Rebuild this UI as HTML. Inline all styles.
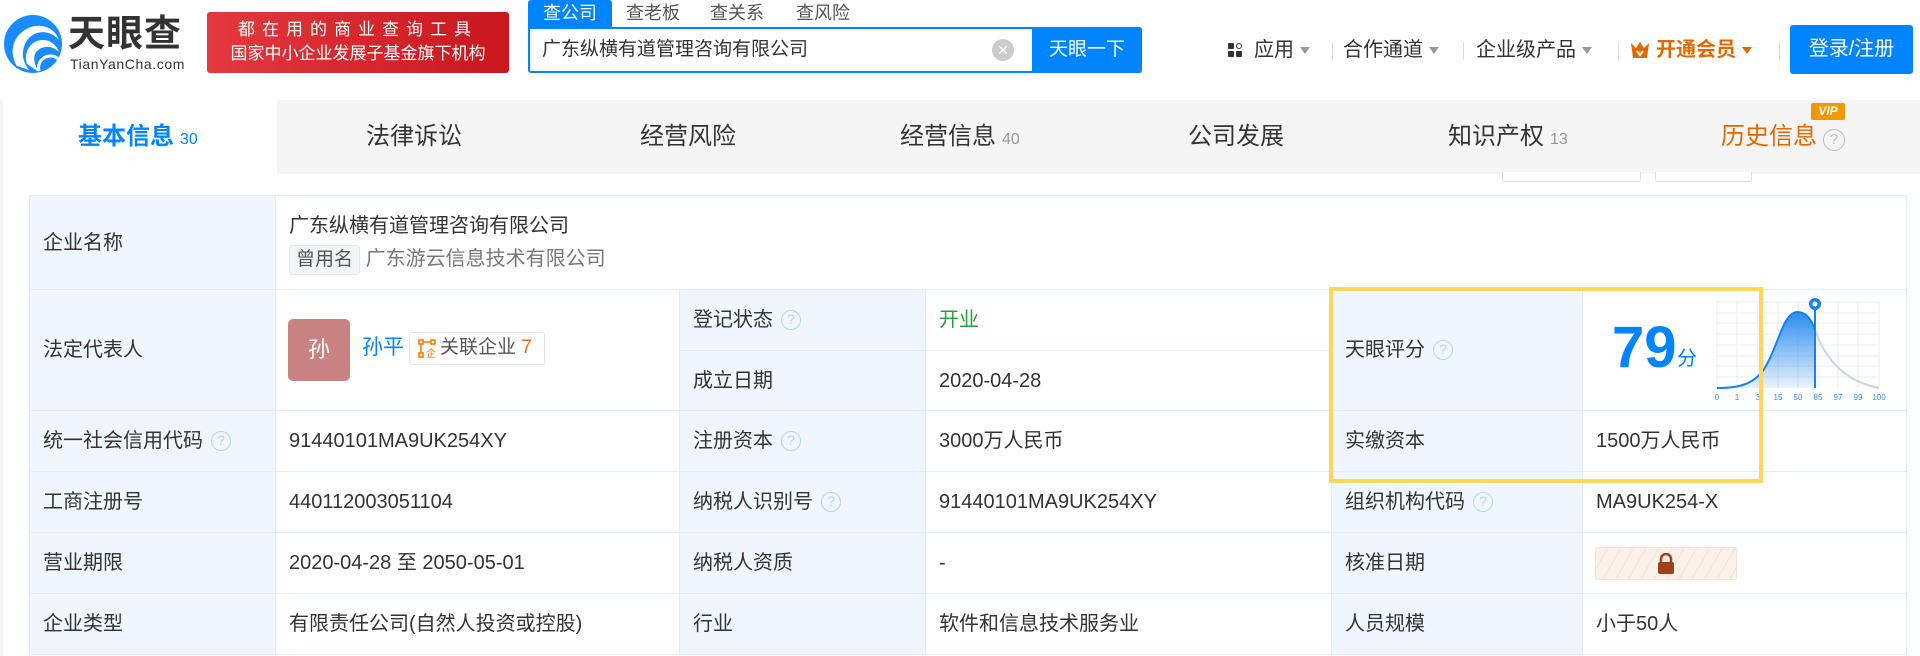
<!DOCTYPE html>
<html><head><meta charset="utf-8">
<style>
*{margin:0;padding:0;box-sizing:border-box}
body{width:1920px;height:656px;overflow:hidden;background:#fff;font-family:"Liberation Sans","Noto Sans CJK SC",sans-serif;color:#333;position:relative}
.a{position:absolute;white-space:nowrap}
.hdr{position:absolute;left:0;top:0;width:1920px;height:100px;background:#fff;box-shadow:0 2px 6px rgba(0,0,0,.06)}
.nav{position:absolute;left:0;top:100px;width:1920px;height:74px;background:#f5f5f5}
.nt{position:absolute;top:122px;font-size:24px;color:#333;line-height:30px}
.nt sup{font-size:16px;color:#999;vertical-align:0;margin-left:6px}
.cell{position:absolute;border:1px solid #e4ecf5;font-size:20px;line-height:26px;display:flex;align-items:center;padding-left:13px;color:#333}
.lb{background:#f0f6fd}
.q{display:inline-block;width:20px;height:20px;border:1.5px solid #b8d4ef;border-radius:50%;color:#b8d4ef;font-size:14px;line-height:17px;text-align:center;margin-left:8px}
.arr{display:inline-block;width:0;height:0;border-left:5px solid transparent;border-right:5px solid transparent;border-top:7px solid #999;margin-left:6px;vertical-align:middle}
.dv{position:absolute;top:42px;width:1px;height:18px;background:#ddd}
.mi{position:absolute;top:35px;font-size:20px;line-height:30px;color:#333}
</style></head><body>
<div class="hdr"></div>
<!-- logo -->
<svg class="a" style="left:3px;top:14px" width="60" height="60" viewBox="0 0 60 60">
<circle cx="30" cy="30" r="29" fill="#1a8cff"/>
<path d="M14 52 C4 36 12 16 32 12 C44 10 54 18 56 26 C46 14 28 16 22 30 C18 40 20 48 26 56 Z" fill="#fff"/>
<path d="M24 50 C20 38 28 26 40 26 C48 26 54 32 56 38 C48 30 36 32 32 40 C30 46 32 52 36 58 Z" fill="#fff"/>
<path d="M36 57 C34 48 40 42 48 42 C52 42 56 45 58 48" stroke="#fff" stroke-width="3" fill="none"/>
</svg>
<div class="a" style="left:68px;top:13px;font-size:37px;font-weight:bold;color:#333;line-height:42px;letter-spacing:1px">天眼查</div>
<div class="a" style="left:70px;top:56px;font-size:14px;color:#333;line-height:16px;letter-spacing:0.6px">TianYanCha.com</div>
<div class="a" style="left:207px;top:12px;width:302px;height:61px;border-radius:3px;background:linear-gradient(90deg,#e3393e,#c8171e);color:#fff;text-align:center">
<div style="font-size:17px;line-height:20px;margin-top:8px;letter-spacing:7px">都在用的商业查询工具</div>
<div style="font-size:17px;line-height:22px;margin-top:3px">国家中小企业发展子基金旗下机构</div></div>
<!-- search -->
<div class="a" style="left:528px;top:0;width:84px;height:28px;background:#0084ff;color:#fff;font-size:18px;line-height:26px;text-align:center;border-radius:3px 3px 0 0">查公司</div>
<div class="a" style="left:626px;top:0;font-size:18px;line-height:26px;color:#555">查老板</div>
<div class="a" style="left:710px;top:0;font-size:18px;line-height:26px;color:#555">查关系</div>
<div class="a" style="left:796px;top:0;font-size:18px;line-height:26px;color:#555">查风险</div>
<div class="a" style="left:528px;top:27px;width:614px;height:46px;border:2px solid #0084ff;border-radius:0 3px 3px 3px"></div>
<div class="a" style="left:542px;top:37px;font-size:19px;line-height:26px;color:#333">广东纵横有道管理咨询有限公司</div>
<div class="a" style="left:992px;top:39px;width:22px;height:22px;border-radius:50%;background:#ccc;color:#fff;font-size:14px;line-height:22px;text-align:center">✕</div>
<div class="a" style="left:1032px;top:27px;width:110px;height:46px;background:#0084ff;color:#fff;font-size:19px;line-height:46px;text-align:center;border-radius:0 3px 3px 0">天眼一下</div>
<!-- menu -->
<div class="a" style="left:1228px;top:43px;width:6px;height:6px;background:#333;border-radius:1px"></div>
<div class="a" style="left:1236px;top:43px;width:6px;height:6px;border:1.5px solid #333;border-radius:50%"></div>
<div class="a" style="left:1228px;top:51px;width:6px;height:6px;background:#333;border-radius:1px"></div>
<div class="a" style="left:1236px;top:51px;width:6px;height:6px;background:#333;border-radius:1px"></div>
<div class="mi" style="left:1254px">应用<span class="arr"></span></div>
<div class="dv" style="left:1332px"></div>
<div class="mi" style="left:1343px">合作通道<span class="arr"></span></div>
<div class="dv" style="left:1463px"></div>
<div class="mi" style="left:1476px">企业级产品<span class="arr"></span></div>
<div class="dv" style="left:1618px"></div>
<svg class="a" style="left:1630px;top:41px" width="20" height="18" viewBox="0 0 20 18"><path d="M1 2 L6 7 L10 1 L14 7 L19 2 L17 17 L3 17 Z" fill="#e06a00"/><path d="M7 10 L10 14 L13 10" stroke="#fff" stroke-width="2" fill="none"/></svg>
<div class="mi" style="left:1656px;color:#e06a00;font-weight:bold">开通会员<span class="arr" style="border-top-color:#e06a00"></span></div>
<div class="dv" style="left:1779px"></div>
<div class="a" style="left:1790px;top:25px;width:123px;height:49px;background:#0084ff;border-radius:3px;color:#fff;font-size:20px;line-height:49px;text-align:center">登录/注册</div>
<!-- nav -->
<div class="nav"></div>
<div class="a" style="left:3px;top:100px;width:274px;height:74px;background:#fff"></div>
<div class="nt" style="left:78px;color:#0084ff;font-weight:bold">基本信息<sup style="color:#0084ff;font-weight:normal">30</sup></div>
<div class="nt" style="left:366px">法律诉讼</div>
<div class="nt" style="left:640px">经营风险</div>
<div class="nt" style="left:900px">经营信息<sup>40</sup></div>
<div class="nt" style="left:1188px">公司发展</div>
<div class="nt" style="left:1448px">知识产权<sup>13</sup></div>
<div class="nt" style="left:1721px;color:#e06a00">历史信息<span class="q" style="border-color:#bbb;color:#bbb;width:22px;height:22px;line-height:19px;font-size:15px;margin-left:6px">?</span></div>
<div class="a" style="left:1811px;top:103px;width:34px;height:17px;background:#f39800;border-radius:2px;color:#fff;font-size:12px;font-weight:bold;font-style:italic;line-height:17px;text-align:center">VIP</div>
<div class="a" style="left:1502px;top:172px;width:139px;height:10px;border:1px solid #ddd;border-top:none;border-radius:0 0 3px 3px;background:#fff"></div>
<div class="a" style="left:1655px;top:172px;width:97px;height:10px;border:1px solid #ddd;border-top:none;border-radius:0 0 3px 3px;background:#fff"></div>
<div class="a" style="left:0;top:174px;width:3px;height:482px;background:#f5f5f5"></div>
<!-- table -->
<div class="cell lb" style="left:29px;top:195px;width:247px;height:95px">企业名称</div>
<div class="cell" style="left:275px;top:195px;width:1632px;height:95px;display:block;padding-top:17px">
<div>广东纵横有道管理咨询有限公司</div>
<div style="margin-top:6px;color:#666"><span style="display:inline-block;background:#f3f4f6;border:1px solid #e8e8e8;border-radius:3px;padding:0 6px;font-size:19px;line-height:28px;color:#555">曾用名</span> <span style="font-size:20px;color:#777">广东游云信息技术有限公司</span></div></div>

<div class="cell lb" style="left:29px;top:289px;width:247px;height:122px">法定代表人</div>
<div class="cell" style="left:275px;top:289px;width:405px;height:122px"></div>
<div class="a" style="left:288px;top:319px;width:62px;height:62px;background:#c98282;border-radius:5px;color:#fff;font-size:22px;line-height:62px;text-align:center">孙</div>
<div class="a" style="left:362px;top:335px;font-size:21px;line-height:26px;color:#0084ff">孙平</div>
<div class="a" style="left:409px;top:332px;width:136px;height:33px;border:1.5px solid #e4e8ee;border-radius:3px;font-size:19px;line-height:30px;color:#555;padding-left:30px">关联企业 <span style="color:#ff6a00">7</span></div>
<svg class="a" style="left:418px;top:339px" width="19" height="19" viewBox="0 0 19 19" fill="none" stroke="#ff7a00" stroke-width="1.6"><rect x="1" y="1" width="4" height="4"/><rect x="13" y="1" width="4" height="4"/><rect x="1" y="14" width="4" height="4"/><path d="M5 3h8M3 5v9"/><text x="8" y="18" font-size="10" fill="#ff7a00" stroke="none" font-family="Noto Sans CJK SC">企</text></svg>

<div class="cell lb" style="left:679px;top:289px;width:247px;height:62px">登记状态<span class="q">?</span></div>
<div class="cell" style="left:925px;top:289px;width:405px;height:62px;color:#21a338">开业</div>
<div class="cell lb" style="left:679px;top:350px;width:247px;height:61px">成立日期</div>
<div class="cell" style="left:925px;top:350px;width:405px;height:61px">2020-04-28</div>
<div class="cell lb" style="left:1331px;top:289px;width:252px;height:122px">天眼评分<span class="q">?</span></div>
<div class="cell" style="left:1582px;top:289px;width:325px;height:122px"></div>
<div class="a" style="left:1612px;top:318px;font-size:58px;font-weight:bold;color:#0084ff;line-height:60px">79</div>
<div class="a" style="left:1677px;top:348px;font-size:20px;color:#0084ff;line-height:22px">分</div>
<svg class="a" style="left:1710px;top:292px" width="180" height="112" viewBox="1710 292 180 112">
<defs><linearGradient id="g" x1="0" y1="0" x2="0" y2="1"><stop offset="0" stop-color="#2b8cf0"/><stop offset="1" stop-color="#2b8cf0" stop-opacity=".1"/></linearGradient></defs>
<g stroke="#e8eef6" stroke-width="1">
<path d="M1717 302V388M1737 302V388M1758 302V388M1778 302V388M1798 302V388M1818 302V388M1838 302V388M1858 302V388M1879 302V388"/>
<path d="M1717 302H1879M1717 313H1879M1717 323H1879M1717 334H1879M1717 345H1879M1717 356H1879M1717 366H1879M1717 377H1879"/></g>
<path d="M1717 388 C1740 388 1752 384 1762 372 C1778 350 1782 313 1797 312 C1808 312 1812 322 1815 330 L1815 388 Z" fill="url(#g)"/>
<path d="M1717 388 C1740 388 1752 384 1762 372 C1778 350 1782 313 1797 312 C1808 312 1812 322 1815 330" stroke="#1a7ff0" stroke-width="2" fill="none"/>
<path d="M1815 330 C1822 350 1838 380 1879 388" stroke="#ccd6e0" stroke-width="2" fill="none"/>
<path d="M1815 306V388" stroke="#1a7ff0" stroke-width="2"/>
<circle cx="1815" cy="304" r="6" fill="#1a7ff0"/><circle cx="1815" cy="304" r="2.5" fill="#fff"/>
<g font-size="8" fill="#3a8ee8" text-anchor="middle" font-family="Liberation Sans"><text x="1717" y="400">0</text><text x="1737" y="400">1</text><text x="1758" y="400">3</text><text x="1778" y="400">15</text><text x="1798" y="400">50</text><text x="1818" y="400">85</text><text x="1838" y="400">97</text><text x="1858" y="400">99</text><text x="1879" y="400">100</text></g>
</svg>

<div class="cell lb" style="left:29px;top:410px;width:247px;height:62px">统一社会信用代码<span class="q">?</span></div>
<div class="cell" style="left:275px;top:410px;width:405px;height:62px">91440101MA9UK254XY</div>
<div class="cell lb" style="left:679px;top:410px;width:247px;height:62px">注册资本<span class="q">?</span></div>
<div class="cell" style="left:925px;top:410px;width:407px;height:62px">3000万人民币</div>
<div class="cell lb" style="left:1331px;top:410px;width:252px;height:62px">实缴资本</div>
<div class="cell" style="left:1582px;top:410px;width:325px;height:62px">1500万人民币</div>

<div class="cell lb" style="left:29px;top:471px;width:247px;height:62px">工商注册号</div>
<div class="cell" style="left:275px;top:471px;width:405px;height:62px">440112003051104</div>
<div class="cell lb" style="left:679px;top:471px;width:247px;height:62px">纳税人识别号<span class="q">?</span></div>
<div class="cell" style="left:925px;top:471px;width:407px;height:62px">91440101MA9UK254XY</div>
<div class="cell lb" style="left:1331px;top:471px;width:252px;height:62px">组织机构代码<span class="q">?</span></div>
<div class="cell" style="left:1582px;top:471px;width:325px;height:62px">MA9UK254-X</div>

<div class="cell lb" style="left:29px;top:532px;width:247px;height:62px">营业期限</div>
<div class="cell" style="left:275px;top:532px;width:405px;height:62px">2020-04-28 至 2050-05-01</div>
<div class="cell lb" style="left:679px;top:532px;width:247px;height:62px">纳税人资质</div>
<div class="cell" style="left:925px;top:532px;width:407px;height:62px">-</div>
<div class="cell lb" style="left:1331px;top:532px;width:252px;height:62px">核准日期</div>
<div class="cell" style="left:1582px;top:532px;width:325px;height:62px"></div>
<div class="a" style="left:1595px;top:547px;width:142px;height:33px;border-radius:3px;background:repeating-linear-gradient(120deg,#fbf1e8 0 10px,#f3e3d6 10px 11px);border:1px solid #f3e6da"></div>
<svg class="a" style="left:1657px;top:553px" width="18" height="21" viewBox="0 0 18 21"><path d="M4 9V6a5 5 0 0 1 10 0v3" stroke="#a0401e" stroke-width="2.5" fill="none"/><rect x="1" y="9" width="16" height="12" rx="2" fill="#a0401e"/></svg>

<div class="cell lb" style="left:29px;top:593px;width:247px;height:62px">企业类型</div>
<div class="cell" style="left:275px;top:593px;width:405px;height:62px">有限责任公司(自然人投资或控股)</div>
<div class="cell lb" style="left:679px;top:593px;width:247px;height:62px">行业</div>
<div class="cell" style="left:925px;top:593px;width:407px;height:62px">软件和信息技术服务业</div>
<div class="cell lb" style="left:1331px;top:593px;width:252px;height:62px">人员规模</div>
<div class="cell" style="left:1582px;top:593px;width:325px;height:62px">小于50人</div>

<div class="a" style="left:1329px;top:287px;width:434px;height:196px;border:4px solid #fdd55f"></div>
</body></html>
